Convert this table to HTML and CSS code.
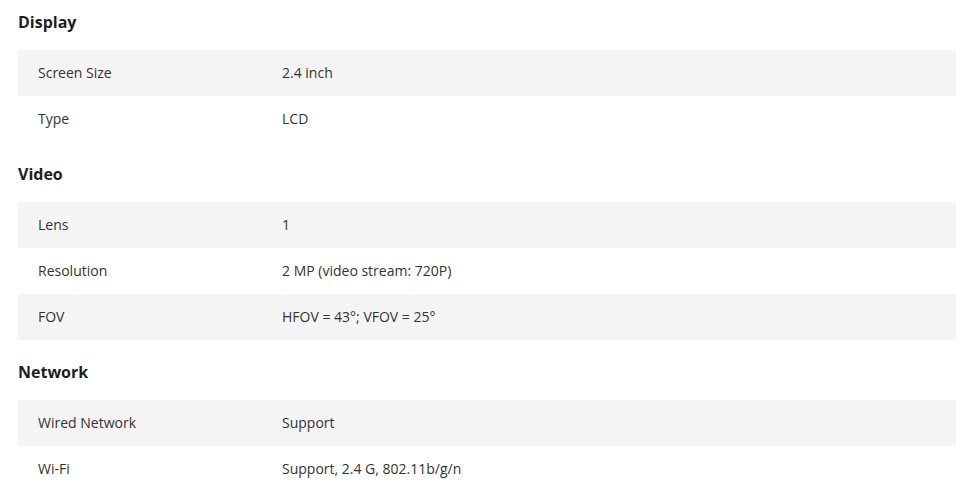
FILE: index.html
```html
<!DOCTYPE html>
<html>
<head>
<meta charset="utf-8">
<link rel="stylesheet" href="styles.css">
</head>
<body>
<div class="specs">
  <h3 class="group-title">Display</h3>
  <div class="table">
    <div class="row"><div class="label">Screen Size</div><div class="value">2.4 inch</div></div>
    <div class="row"><div class="label">Type</div><div class="value">LCD</div></div>
  </div>
  <h3 class="group-title">Video</h3>
  <div class="table">
    <div class="row"><div class="label">Lens</div><div class="value">1</div></div>
    <div class="row"><div class="label">Resolution</div><div class="value">2 MP (video stream: 720P)</div></div>
    <div class="row"><div class="label">FOV</div><div class="value">HFOV = 43°; VFOV = 25°</div></div>
  </div>
  <h3 class="group-title">Network</h3>
  <div class="table">
    <div class="row"><div class="label">Wired Network</div><div class="value">Support</div></div>
    <div class="row"><div class="label">Wi-Fi</div><div class="value">Support, 2.4 G, 802.11b/g/n</div></div>
  </div>
</div>
</body>
</html>
```
FILE: styles.css
```css
html, body {
  margin: 0;
  padding: 0;
  background: #fff;
}
body {
  font-family: "Open Sans", "Liberation Sans", sans-serif;
  color: #333;
}
.specs {
  padding: 10px 20px 0 18px;
}
.group-title {
  margin: 20px 0 16px;
  font-size: 16px;
  line-height: 24px;
  font-weight: 700;
  color: #1f1f1f;
}
.group-title:first-child {
  margin-top: 0;
}
.table {
  display: flex;
  flex-direction: column;
}
.row {
  display: grid;
  grid-template-columns: 264px 1fr;
  align-items: center;
  height: 46px;
  font-size: 14px;
  line-height: 20px;
}
.row:nth-child(odd) {
  background: #f4f4f4;
}
.label {
  padding-left: 20px;
}
```
